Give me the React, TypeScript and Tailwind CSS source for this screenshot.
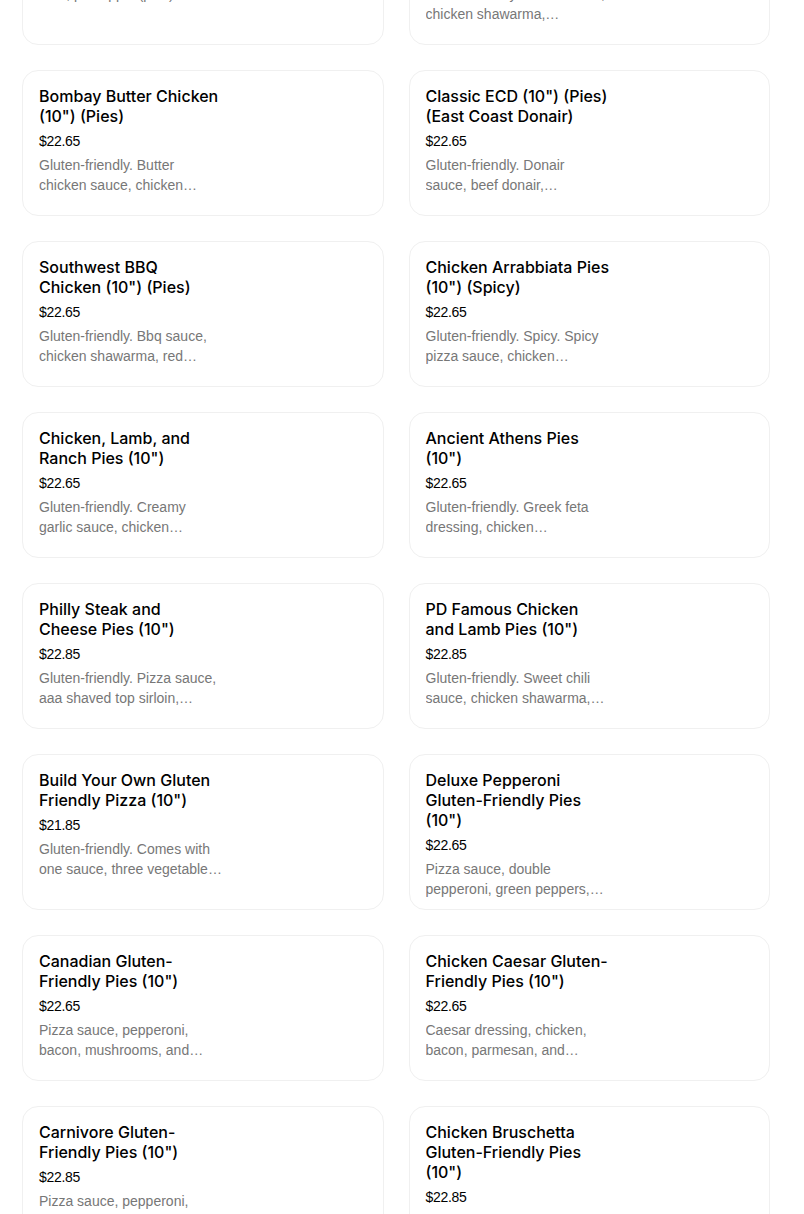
import React from "react";

type Item = {
  name: string;
  price: string;
  description: string;
};

const ITEMS: Item[] = [
  {
    name: "Hawaiian Pies (10\")",
    price: "$22.65",
    description: "Gluten-friendly. Pizza sauce, ham, pineapple (pies)…",
  },
  {
    name: "Chicken Shawarma Pies (10\") (Pies)",
    price: "$22.65",
    description: "Gluten-friendly. Garlic sauce, chicken shawarma,…",
  },
  {
    name: "Bombay Butter Chicken (10\") (Pies)",
    price: "$22.65",
    description: "Gluten-friendly. Butter chicken sauce, chicken…",
  },
  {
    name: "Classic ECD (10\") (Pies) (East Coast Donair)",
    price: "$22.65",
    description: "Gluten-friendly. Donair sauce, beef donair,…",
  },
  {
    name: "Southwest BBQ Chicken (10\") (Pies)",
    price: "$22.65",
    description: "Gluten-friendly. Bbq sauce, chicken shawarma, red…",
  },
  {
    name: "Chicken Arrabbiata Pies (10\") (Spicy)",
    price: "$22.65",
    description: "Gluten-friendly. Spicy. Spicy pizza sauce, chicken…",
  },
  {
    name: "Chicken, Lamb, and Ranch Pies (10\")",
    price: "$22.65",
    description: "Gluten-friendly. Creamy garlic sauce, chicken…",
  },
  {
    name: "Ancient Athens Pies (10\")",
    price: "$22.65",
    description: "Gluten-friendly. Greek feta dressing, chicken…",
  },
  {
    name: "Philly Steak and Cheese Pies (10\")",
    price: "$22.85",
    description: "Gluten-friendly. Pizza sauce, aaa shaved top sirloin,…",
  },
  {
    name: "PD Famous Chicken and Lamb Pies (10\")",
    price: "$22.85",
    description: "Gluten-friendly. Sweet chili sauce, chicken shawarma,…",
  },
  {
    name: "Build Your Own Gluten Friendly Pizza (10\")",
    price: "$21.85",
    description: "Gluten-friendly. Comes with one sauce, three vegetable…",
  },
  {
    name: "Deluxe Pepperoni Gluten-Friendly Pies (10\")",
    price: "$22.65",
    description: "Pizza sauce, double pepperoni, green peppers,…",
  },
  {
    name: "Canadian Gluten-Friendly Pies (10\")",
    price: "$22.65",
    description: "Pizza sauce, pepperoni, bacon, mushrooms, and…",
  },
  {
    name: "Chicken Caesar Gluten-Friendly Pies (10\")",
    price: "$22.65",
    description: "Caesar dressing, chicken, bacon, parmesan, and…",
  },
  {
    name: "Carnivore Gluten-Friendly Pies (10\")",
    price: "$22.85",
    description: "Pizza sauce, pepperoni, bacon, ham, beef and…",
  },
  {
    name: "Chicken Bruschetta Gluten-Friendly Pies (10\")",
    price: "$22.85",
    description: "Bruschetta, chicken shawarma, balsamic glaze…",
  },
];

function ItemCard({ item }: { item: Item }) {
  return (
    <div className="min-h-[146px] rounded-2xl border border-[#f0f0f0] bg-white px-4 pt-[15px] pb-[10px]">
      <div className="w-[184px]">
        <h3 className="text-[16px] leading-5 font-medium text-black [font-family:Inter,'Noto_Sans',sans-serif]">
          {item.name}
        </h3>
        <div className="mt-[5px] text-[14px] leading-5 tracking-[-0.3px] text-black [font-family:'Liberation_Sans',Arial,sans-serif]">
          {item.price}
        </div>
        <p className="mt-1 line-clamp-2 text-[14px] leading-5 text-[#777777] [font-family:'Liberation_Sans',Arial,sans-serif]">
          {item.description}
        </p>
      </div>
    </div>
  );
}

export default function App() {
  return (
    <div className="h-[1214px] overflow-hidden bg-white">
      <div className="mt-[-101px] grid grid-cols-2 gap-x-[25px] gap-y-[25px] pl-[22px] pr-[34px]">
        {ITEMS.map((item) => (
          <ItemCard key={item.name} item={item} />
        ))}
      </div>
    </div>
  );
}
